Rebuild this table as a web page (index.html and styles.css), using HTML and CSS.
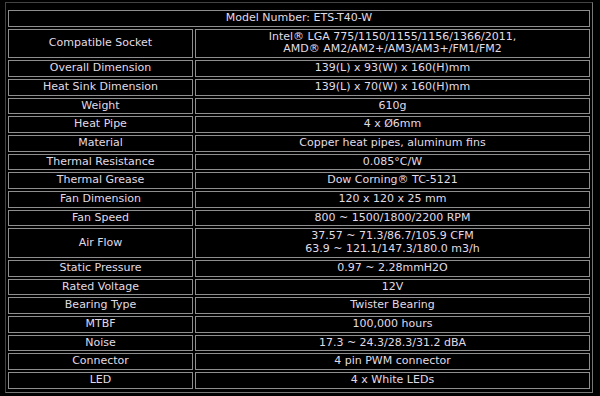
FILE: index.html
```html
<!DOCTYPE html>
<html>
<head>
<meta charset="utf-8">
<link rel="stylesheet" href="styles.css">
</head>
<body>
<table class="spec">
  <tr><td class="title" colspan="2">Model Number: ETS-T40-W</td></tr>
  <tr class="dbl"><td class="k">Compatible Socket</td><td class="v">Intel® LGA 775/1150/1155/1156/1366/2011,<br>AMD® AM2/AM2+/AM3/AM3+/FM1/FM2</td></tr>
  <tr><td class="k">Overall Dimension</td><td class="v">139(L) x 93(W) x 160(H)mm</td></tr>
  <tr><td class="k">Heat Sink Dimension</td><td class="v">139(L) x 70(W) x 160(H)mm</td></tr>
  <tr><td class="k">Weight</td><td class="v">610g</td></tr>
  <tr><td class="k">Heat Pipe</td><td class="v">4 x Ø6mm</td></tr>
  <tr><td class="k">Material</td><td class="v">Copper heat pipes, aluminum fins</td></tr>
  <tr><td class="k">Thermal Resistance</td><td class="v">0.085°C/W</td></tr>
  <tr><td class="k">Thermal Grease</td><td class="v">Dow Corning® TC-5121</td></tr>
  <tr><td class="k">Fan Dimension</td><td class="v">120 x 120 x 25 mm</td></tr>
  <tr><td class="k">Fan Speed</td><td class="v">800 ~ 1500/1800/2200 RPM</td></tr>
  <tr class="dbl"><td class="k">Air Flow</td><td class="v">37.57 ~ 71.3/86.7/105.9 CFM<br>63.9 ~ 121.1/147.3/180.0 m3/h</td></tr>
  <tr><td class="k">Static Pressure</td><td class="v">0.97 ~ 2.28mmH2O</td></tr>
  <tr><td class="k">Rated Voltage</td><td class="v">12V</td></tr>
  <tr><td class="k">Bearing Type</td><td class="v">Twister Bearing</td></tr>
  <tr><td class="k">MTBF</td><td class="v">100,000 hours</td></tr>
  <tr><td class="k">Noise</td><td class="v">17.3 ~ 24.3/28.3/31.2 dBA</td></tr>
  <tr><td class="k">Connector</td><td class="v">4 pin PWM connector</td></tr>
  <tr><td class="k">LED</td><td class="v">4 x White LEDs</td></tr>
</table>
</body>
</html>
```
FILE: styles.css
```css
html, body {
  margin: 0;
  padding: 0;
  background: #000;
}
body {
  padding: 2px 0 0 5px;
}
.spec {
  border-collapse: separate;
  border-spacing: 2px;
  width: 588px;
  border: 1px solid;
  border-color: #444 #777 #777 #444;
  padding: 5px 0 1px 0;
  font-family: "DejaVu Sans", Verdana, sans-serif;
  font-size: 11px;
  color: #e0dce6;
  line-height: 12.7px;
}
.spec td {
  border: 1px solid #8e8e8e;
  padding: 1px 0 1px 0;
  text-align: center;
  white-space: nowrap;
}
.spec td.k {
  width: 183px;
}
.spec tr {
  height: 16.7px;
}
```
